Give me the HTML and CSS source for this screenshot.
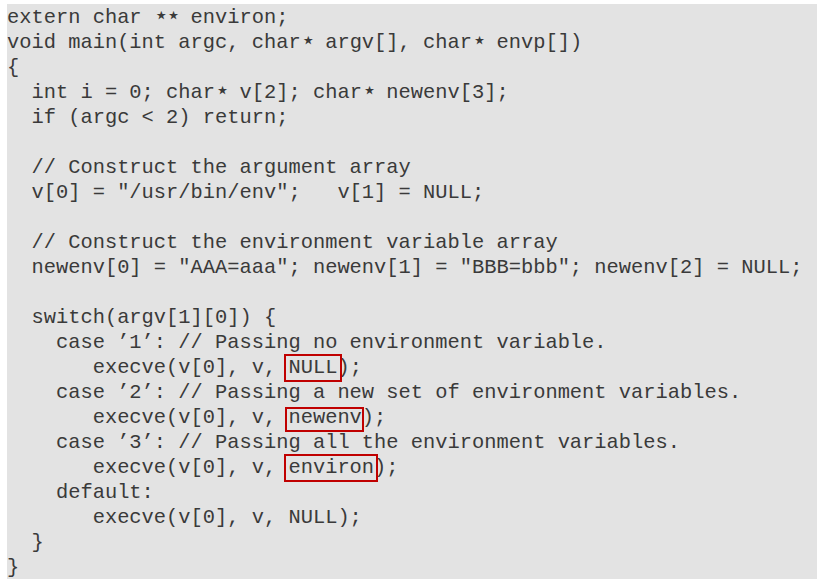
FILE: index.html
```html
<!DOCTYPE html>
<html>
<head>
<meta charset="utf-8">
<link rel="stylesheet" href="styles.css">
</head>
<body>
<pre class="code">extern char <span class="st">⋆</span><span class="st">⋆</span> environ;
void main(int argc, char<span class="st">⋆</span> argv[], char<span class="st">⋆</span> envp[])
{
  int i = 0; char<span class="st">⋆</span> v[2]; char<span class="st">⋆</span> newenv[3];
  if (argc &lt; 2) return;

  // Construct the argument array
  v[0] = "/usr/bin/env";   v[1] = NULL;

  // Construct the environment variable array
  newenv[0] = "AAA=aaa"; newenv[1] = "BBB=bbb"; newenv[2] = NULL;

  switch(argv[1][0]) {
    case ’1’: // Passing no environment variable.
       execve(v[0], v, <span class="hl hl-a">NULL</span>);
    case ’2’: // Passing a new set of environment variables.
       execve(v[0], v, <span class="hl hl-b">newenv</span>);
    case ’3’: // Passing all the environment variables.
       execve(v[0], v, <span class="hl hl-c">environ</span>);
    default:
       execve(v[0], v, NULL);
  }
}</pre>
</body>
</html>
```

FILE: styles.css
```css
html, body {
  margin: 0;
  padding: 0;
  background: #ffffff;
}

.code {
  margin: 4px 5px 0 7px;
  padding: 1px 0 0 0;
  width: 810px;
  height: 575px;
  box-sizing: border-box;
  background: #e3e3e3;
  color: #3a3a3a;
  font-family: "Liberation Mono", "Courier New", monospace;
  font-size: 20.4px;
  line-height: 25px;
  white-space: pre;
  overflow: hidden;
}

.st {
  display: inline-block;
  width: 12.24px;
  text-align: center;
  font-family: "DejaVu Sans", sans-serif;
  font-size: 24px;
  line-height: 16px;
  vertical-align: 0;
}

.hl {
  position: relative;
}

.hl::after {
  content: "";
  position: absolute;
  border: 2px solid #c00000;
  left: -4px;
  right: -5px;
  top: -2px;
  bottom: -3px;
}

.hl-b::after {
  top: 1px;
  bottom: -3px;
  left: -3px;
  right: -2px;
}

.hl-c::after {
  left: -4px;
  right: -4px;
}
```
